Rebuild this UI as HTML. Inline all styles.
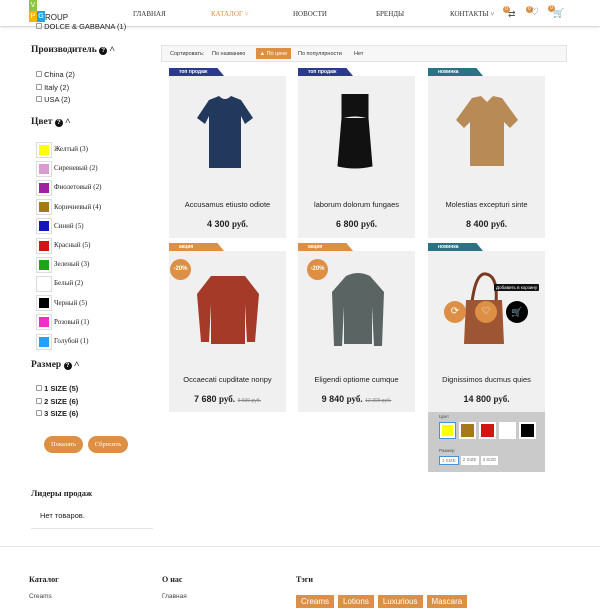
<!DOCTYPE html><html><head><meta charset="utf-8"><style>
*{margin:0;padding:0;box-sizing:border-box}
body{width:600px;height:600px;overflow:hidden;background:#fff;font-family:"Liberation Sans",sans-serif;position:relative;color:#222}
.a{position:absolute}
.serif{font-family:"Liberation Serif",serif}
.nav{font-family:"Liberation Serif",serif;font-size:7px;color:#333}
.h{font-family:"Liberation Serif",serif;font-weight:bold;font-size:9.5px}
.q{display:inline-block;width:8px;height:8px;border-radius:50%;background:#111;color:#fff;font-size:6px;line-height:8px;text-align:center;font-family:"Liberation Sans",sans-serif;vertical-align:0}
.cb{width:6px;height:6px;border:1px solid #999;border-radius:1px;display:inline-block}
.lbl{font-size:7.5px}
.sw{width:16px;height:16px;border:1px solid #ddd;padding:2px}
.sw div{width:100%;height:100%}
.card{position:absolute;background:#f0f0f0;width:117px}
.tag{position:absolute;height:8px;color:#fff;font-size:5px;font-weight:bold;padding:1px 0 0 10px;width:55px;clip-path:polygon(0 0,88% 0,100% 100%,0 100%)}
.title{position:absolute;width:117px;text-align:center;font-size:7.5px}
.price{position:absolute;width:117px;text-align:center;font-size:9px;font-weight:bold}
.price s{font-weight:normal;font-size:5px;color:#888}
.btn{background:#dd8f45;color:#fff;border-radius:9px;font-family:"Liberation Serif",serif;font-size:6.5px;text-align:center;line-height:17px;height:17px}
.ft{font-size:6.5px;color:#444}
.tg{background:#dd8f45;color:#fff;font-size:8px;padding:2px 5px;display:inline-block;margin-right:4px}
.circ{position:absolute;width:22px;height:22px;border-radius:50%}
</style></head><body>
<div class="a" style="left:0;top:0;width:600px;height:26px;background:#fff;box-shadow:0 1px 2px #ccc"></div>
<div class="a" style="left:29px;top:0;width:8px;height:11px;background:#8dc63f;color:#fff;font-size:7px;text-align:center;line-height:11px">V</div>
<div class="a" style="left:29px;top:11px;width:8px;height:11px;background:#f7b500;color:#fff;font-size:7px;text-align:center;line-height:11px">P</div>
<div class="a" style="left:37px;top:11px;width:8px;height:11px;background:#2aa3dc;color:#fff;font-size:7px;text-align:center;line-height:11px">G</div>
<div class="a" style="left:45px;top:13px;font-size:8px">ROUP</div>
<div class="a nav" style="left:133px;top:10px">ГЛАВНАЯ</div>
<div class="a nav" style="left:211px;top:10px;color:#dd8f45">КАТАЛОГ ˅</div>
<div class="a nav" style="left:293px;top:10px">НОВОСТИ</div>
<div class="a nav" style="left:376px;top:10px">БРЕНДЫ</div>
<div class="a nav" style="left:450px;top:10px">КОНТАКТЫ ˅</div>
<div class="a" style="left:503px;top:6px;width:7px;height:7px;border-radius:50%;background:#dd8f45;color:#fff;font-size:5px;text-align:center">0</div>
<div class="a" style="left:508px;top:9px;font-size:9px;color:#555">⇄</div>
<div class="a" style="left:526px;top:6px;width:7px;height:7px;border-radius:50%;background:#dd8f45;color:#fff;font-size:5px;text-align:center">0</div>
<div class="a" style="left:530px;top:7px;font-size:10px;color:#555">♡</div>
<div class="a" style="left:548px;top:5px;width:7px;height:7px;border-radius:50%;background:#dd8f45;color:#fff;font-size:5px;text-align:center">0</div>
<div class="a" style="left:553px;top:8px;font-size:9px;color:#555">🛒</div>
<div class="a lbl" style="left:36px;top:22px"><span class="cb"></span> DOLCE &amp; GABBANA (1)</div>
<div class="a h" style="left:31px;top:45px">Производитель <span class="q">?</span> ˄</div>
<div class="a lbl" style="left:36px;top:69px;line-height:12.5px"><span class="cb"></span> China (2)<br><span class="cb"></span> Italy (2)<br><span class="cb"></span> USA (2)</div>
<div class="a h" style="left:31px;top:117px">Цвет <span class="q">?</span> ˄</div>
<div class="a serif" style="left:36px;top:140px;font-size:7px;line-height:19.2px">
<div style="display:flex;align-items:center;gap:2px"><div class="sw"><div style="background:#ff0"></div></div>Желтый (3)</div>
<div style="display:flex;align-items:center;gap:2px"><div class="sw"><div style="background:#d99bcf"></div></div>Сиреневый (2)</div>
<div style="display:flex;align-items:center;gap:2px"><div class="sw"><div style="background:#a020a0"></div></div>Фиолетовый (2)</div>
<div style="display:flex;align-items:center;gap:2px"><div class="sw"><div style="background:#a57818"></div></div>Коричневый (4)</div>
<div style="display:flex;align-items:center;gap:2px"><div class="sw"><div style="background:#1515c0"></div></div>Синий (5)</div>
<div style="display:flex;align-items:center;gap:2px"><div class="sw"><div style="background:#d01515"></div></div>Красный (5)</div>
<div style="display:flex;align-items:center;gap:2px"><div class="sw"><div style="background:#1aa51a"></div></div>Зеленый (3)</div>
<div style="display:flex;align-items:center;gap:2px"><div class="sw"><div style="background:#fff"></div></div>Белый (2)</div>
<div style="display:flex;align-items:center;gap:2px"><div class="sw"><div style="background:#000"></div></div>Черный (5)</div>
<div style="display:flex;align-items:center;gap:2px"><div class="sw"><div style="background:#f52bc8"></div></div>Розовый (1)</div>
<div style="display:flex;align-items:center;gap:2px"><div class="sw"><div style="background:#25a0f5"></div></div>Голубой (1)</div>
</div>
<div class="a h" style="left:31px;top:360px">Размер <span class="q">?</span> ˄</div>
<div class="a lbl" style="left:36px;top:383px;line-height:12.5px;font-weight:bold"><span class="cb"></span> 1 SIZE (5)<br><span class="cb"></span> 2 SIZE (6)<br><span class="cb"></span> 3 SIZE (6)</div>
<div class="a btn" style="left:44px;top:436px;width:39px">Показать</div>
<div class="a btn" style="left:88px;top:436px;width:40px">Сбросить</div>
<div class="a h" style="left:31px;top:488px;font-size:8.5px">Лидеры продаж</div>
<div class="a" style="left:40px;top:511px;font-size:7.5px">Нет товаров.</div>
<div class="a" style="left:31px;top:528px;width:122px;height:1px;background:#e6e6e6"></div>
<div class="a" style="left:0;top:546px;width:600px;height:1px;background:#e6e6e6"></div>
<div class="a" style="left:161px;top:45px;width:406px;height:17px;border:1px solid #e3e3e3;background:#f7f7f7;font-size:5.5px;color:#333">
<span class="a" style="left:8px;top:5px">Сортировать:</span>
<span class="a" style="left:50px;top:5px">По названию</span>
<span class="a" style="left:94px;top:2px;width:35px;height:11px;background:#dd8f45;color:#fff;padding-top:3px;text-align:center">▲ По цене</span>
<span class="a" style="left:136px;top:5px">По популярности</span>
<span class="a" style="left:192px;top:5px">Нет</span></div>
<div class="tag" style="left:169px;top:68px;background:#2b3a8c">топ продаж</div>
<div class="tag" style="left:298px;top:68px;background:#2b3a8c">топ продаж</div>
<div class="tag" style="left:428px;top:68px;background:#2a7384">новинка</div>
<div class="card" style="left:169px;top:76px;height:162px"></div>
<div class="card" style="left:298px;top:76px;height:162px"></div>
<div class="card" style="left:428px;top:76px;height:162px"></div>
<svg class="a" style="left:195px;top:94px" width="60" height="76"><path d="M14 6 L24 2 Q30 8 36 2 L46 6 L58 24 L50 30 L46 22 L46 74 L14 74 L14 22 L10 30 L2 24Z" fill="#23385d"/></svg>
<svg class="a" style="left:330px;top:92px" width="50" height="78"><path d="M12 2 L12 26 Q25 22 38 26 L38 2 M12 26 L8 74 Q25 78 42 74 L38 26" fill="#111" stroke="#111"/></svg>
<svg class="a" style="left:454px;top:96px" width="66" height="72"><path d="M18 2 L27 0 L33 6 L39 0 L48 2 L64 24 L56 32 L50 26 L50 70 L16 70 L16 26 L10 32 L2 24Z" fill="#b88a55"/></svg>
<div class="title" style="left:169px;top:200px">Accusamus etiusto odiote</div>
<div class="title" style="left:298px;top:200px">laborum dolorum fungaes</div>
<div class="title" style="left:428px;top:200px">Molestias excepturi sinte</div>
<div class="price" style="left:169px;top:219px">4 300 <span class="serif">руб.</span></div>
<div class="price" style="left:298px;top:219px">6 800 <span class="serif">руб.</span></div>
<div class="price" style="left:428px;top:219px">8 400 <span class="serif">руб.</span></div>
<div class="tag" style="left:169px;top:243px;background:#dd8f45">акция</div>
<div class="tag" style="left:298px;top:243px;background:#dd8f45">акция</div>
<div class="tag" style="left:428px;top:243px;background:#2a7384">новинка</div>
<div class="card" style="left:169px;top:251px;height:161px"></div>
<div class="card" style="left:298px;top:251px;height:161px"></div>
<div class="card" style="left:428px;top:251px;height:221px;background:#f0f0f0"></div>
<div class="a" style="left:428px;top:412px;width:117px;height:60px;background:#cacaca"></div>
<svg class="a" style="left:195px;top:274px" width="66" height="72"><path d="M16 2 L50 2 L64 20 L60 68 L52 68 L50 30 L50 70 L16 70 L16 30 L14 68 L6 68 L2 20Z" fill="#a63a28"/></svg>
<svg class="a" style="left:328px;top:272px" width="60" height="76"><path d="M18 4 Q30 -2 42 4 L56 20 L54 74 L46 74 L44 34 L44 72 L16 72 L16 34 L14 74 L6 74 L4 20Z" fill="#5a6463"/></svg>
<svg class="a" style="left:462px;top:272px" width="46" height="76"><path d="M10 30 Q14 0 24 2 Q36 4 34 30" fill="none" stroke="#7a3a20" stroke-width="3"/><path d="M4 28 L40 28 L42 72 L2 72Z" fill="#9e5533"/></svg>
<div class="a" style="left:170px;top:259px;width:21px;height:21px;border-radius:50%;background:#dd8f45;color:#fff;font-size:6px;font-weight:bold;text-align:center;line-height:21px">-20%</div>
<div class="a" style="left:307px;top:259px;width:21px;height:21px;border-radius:50%;background:#dd8f45;color:#fff;font-size:6px;font-weight:bold;text-align:center;line-height:21px">-20%</div>
<div class="circ" style="left:444px;top:301px;background:#dd8f45;color:#fff;font-size:10px;text-align:center;line-height:22px">⟳</div>
<div class="circ" style="left:475px;top:301px;background:#dd8f45;color:#fff;font-size:10px;text-align:center;line-height:22px">♡</div>
<div class="circ" style="left:506px;top:301px;background:#000;color:#fff;font-size:9px;text-align:center;line-height:22px">🛒</div>
<div class="a" style="left:494px;top:284px;background:#111;color:#fff;font-size:4.5px;padding:1px 2px;border-radius:1px">Добавить в корзину</div>
<div class="title" style="left:169px;top:375px">Occaecati cupditate nonpy</div>
<div class="title" style="left:298px;top:375px">Eligendi optiome cumque</div>
<div class="title" style="left:428px;top:375px">Dignissimos ducmus quies</div>
<div class="price" style="left:169px;top:394px">7 680 <span class="serif">руб.</span> <s>9 600 руб.</s></div>
<div class="price" style="left:298px;top:394px">9 840 <span class="serif">руб.</span> <s>12 300 руб.</s></div>
<div class="price" style="left:428px;top:394px">14 800 <span class="serif">руб.</span></div>
<div class="a" style="left:439px;top:414px;font-size:4.5px;color:#555">Цвет</div>
<div class="a" style="left:439px;top:422px;display:flex;gap:3px">
<div style="width:17px;height:17px;border:1px solid #4a8fd8;background:#fff;padding:2px"><div style="background:#ff0;height:100%"></div></div>
<div style="width:17px;height:17px;background:#fff;padding:2px"><div style="background:#a57818;height:100%"></div></div>
<div style="width:17px;height:17px;background:#fff;padding:2px"><div style="background:#d01515;height:100%"></div></div>
<div style="width:17px;height:17px;background:#fff;padding:2px"><div style="background:#fff;height:100%"></div></div>
<div style="width:17px;height:17px;background:#fff;padding:2px"><div style="background:#000;height:100%"></div></div></div>
<div class="a" style="left:439px;top:448px;font-size:4.5px;color:#555">Размер</div>
<div class="a" style="left:439px;top:456px;display:flex;gap:2px;font-size:4.5px;color:#777">
<div style="background:#fff;border:1px solid #4a8fd8;padding:1px 2px">1 SIZE</div>
<div style="background:#fff;padding:1px 2px">2 SIZE</div>
<div style="background:#fff;padding:1px 2px">3 SIZE</div></div>
<div class="a h" style="left:29px;top:575px;font-size:8px">Каталог</div>
<div class="a h" style="left:162px;top:575px;font-size:8px">О нас</div>
<div class="a h" style="left:296px;top:575px;font-size:8px">Тэги</div>
<div class="a ft" style="left:29px;top:593px">Creams</div>
<div class="a ft" style="left:162px;top:593px">Главная</div>
<div class="a" style="left:296px;top:591px"><span class="tg">Creams</span><span class="tg">Lotions</span><span class="tg">Luxurious</span><span class="tg">Mascara</span></div>
</body></html>
